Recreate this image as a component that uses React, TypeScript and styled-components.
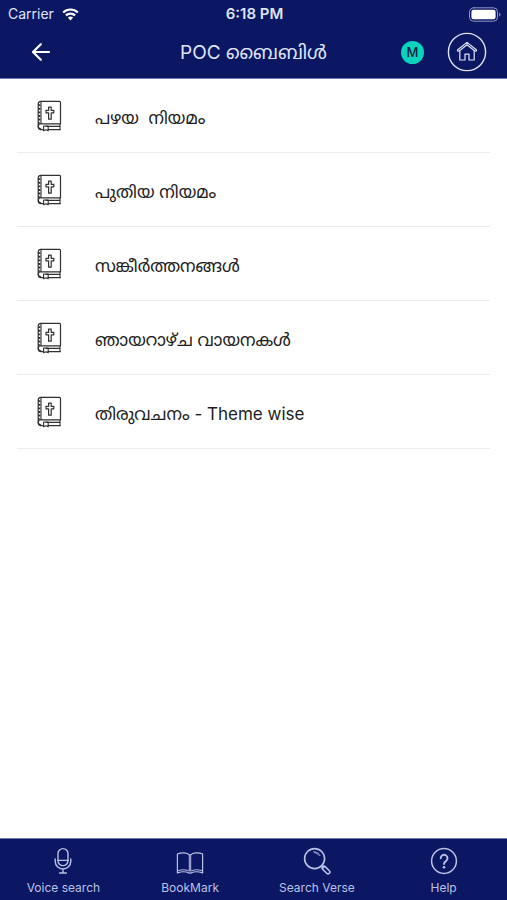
import React from "react";
import styled, { createGlobalStyle } from "styled-components";

const NAVY = "#0c1763";
const PALE = "#dfe4fa";

const GlobalStyle = createGlobalStyle`
  *, *::before, *::after { box-sizing: border-box; }
  body {
    margin: 0;
    background: #fff;
    font-family: Inter, "Noto Sans", "Noto Sans Malayalam", sans-serif;
  }
`;

const Screen = styled.div`
  display: flex;
  flex-direction: column;
  min-height: 100vh;
`;

const Header = styled.header`
  background: ${NAVY};
  color: #fff;
  border-bottom: 1px solid #6f78b4;
`;

const StatusBar = styled.div`
  display: grid;
  grid-template-columns: 1fr auto 1fr;
  align-items: center;
  height: 26px;
  padding: 2px 6px 0 8px;
  font-size: 14px;
  line-height: 20px;
  color: ${PALE};
`;

const Carrier = styled.span`
  display: flex;
  align-items: center;
  gap: 8px;
`;

const Clock = styled.time`
  font-size: 15px;
  font-weight: 600;
`;

const BatterySlot = styled.span`
  display: flex;
  justify-content: flex-end;
`;

const NavBar = styled.div`
  display: grid;
  grid-template-columns: 1fr auto 1fr;
  align-items: center;
  height: 52px;
  padding: 0 20px;
`;

const Title = styled.h1`
  margin: 0;
  padding-top: 2px;
  font-size: 19px;
  line-height: 28px;
  font-weight: 400;
  color: ${PALE};
  white-space: nowrap;
`;

const Actions = styled.div`
  display: flex;
  align-items: center;
  justify-content: flex-end;
  gap: 23px;
`;

const PlainButton = styled.button`
  display: flex;
  align-items: center;
  justify-content: center;
  padding: 0;
  border: 0;
  background: none;
  color: inherit;
  font: inherit;
  cursor: pointer;
`;

const BackButton = styled(PlainButton)`
  width: 42px;
  height: 40px;
`;

const LanguageButton = styled(PlainButton)`
  width: 23px;
  height: 23px;
  border-radius: 50%;
  background: #08d3bd;
  color: #06213a;
  font-size: 13px;
  line-height: 16px;
  font-weight: 500;
`;

const HomeButton = styled(PlainButton)`
  width: 40px;
  height: 40px;
`;

const Main = styled.main`
  flex: 1;
`;

const BookList = styled.ul`
  margin: 0;
  padding: 0 17px;
  list-style: none;
`;

const BookItem = styled.li`
  border-bottom: 1px solid #ececec;
`;

const BookLink = styled.a`
  display: flex;
  align-items: center;
  gap: 33px;
  height: 73px;
  padding: 0 19px;
  color: #1d1d1d;
  text-decoration: none;
`;

const BookLabel = styled.span`
  padding-top: 4px;
  font-size: 17px;
  line-height: 28px;
  white-space: pre;
`;

const TabBar = styled.nav`
  display: grid;
  grid-template-columns: repeat(4, 1fr);
  height: 62px;
  border-top: 1px solid #6f78b4;
  background: ${NAVY};
`;

const Tab = styled.button`
  display: flex;
  flex-direction: column;
  align-items: center;
  gap: 5px;
  padding: 8px 0 0;
  border: 0;
  background: none;
  color: #b9c1e4;
  font-family: inherit;
  font-size: 12px;
  line-height: 16px;
  cursor: pointer;
`;

const Glyph = styled.svg`
  display: block;
  flex: none;
  fill: none;
  stroke: currentColor;
  stroke-linecap: round;
  stroke-linejoin: round;
`;

const WifiIcon = () => (
  <Glyph width="17" height="13" viewBox="0 0 17 13" strokeWidth="2.2" color="#fff">
    <path d="M1.2 4.5a10.4 10.4 0 0 1 14.6 0M3.9 7.4a6.6 6.6 0 0 1 9.2 0" strokeLinecap="butt" />
    <path d="M8.5 12.4 5.9 9.6a3.8 3.8 0 0 1 5.2 0Z" fill="currentColor" stroke="none" />
  </Glyph>
);

const BatteryIcon = () => (
  <Glyph width="32" height="15" viewBox="0 0 32 15" color="#fff">
    <rect x="0.5" y="0.8" width="28" height="13.4" rx="4" stroke="#8f97c6" />
    <rect x="2.4" y="2.7" width="24.2" height="9.6" rx="2.2" fill="currentColor" stroke="none" />
    <path d="M30.2 5.4c1.8.8 1.8 3.4 0 4.2Z" fill="#8f97c6" stroke="none" />
  </Glyph>
);

const BackIcon = () => (
  <Glyph width="20" height="20" viewBox="0 0 20 20" strokeWidth="2.2">
    <path d="M18 10H2.2M9.8 2.2 2 10l7.8 7.8" />
  </Glyph>
);

const HomeIcon = () => (
  <Glyph width="40" height="40" viewBox="0 0 40 40" strokeWidth="1.2" color={PALE}>
    <circle cx="20" cy="20" r="18.6" strokeWidth="1.4" />
    <path d="M11 19.2a.9.9 0 0 1-.3-1.4L20 10.4l9.3 7.4a.9.9 0 0 1-.3 1.4l-1.2-.2L20 12.8 12.2 19Z" />
    <path d="M12.8 19v9h5.2v-5.8h4V28h5.2v-9" />
  </Glyph>
);

const BibleIcon = () => (
  <Glyph width="26" height="32" viewBox="0 0 26 32" strokeWidth="1.2" color="#303030">
    <path d="M5 1.4h18.5a1 1 0 0 1 1 1v21.4H5.2M5 1.4A2.8 2.8 0 0 0 2.2 4v23.2A2.8 2.8 0 0 0 5 29.6h2.6" />
    <path d="M5 1.4v22.4c-3.6.2-3.6 4.6-.2 4.9M12 29.6h12.5M24 24v5.4M10 26.4h14" strokeWidth="1.1" />
    <path d="M3.3 4.2v19.6" strokeWidth="2.2" strokeDasharray="1.9 1.7" strokeLinecap="butt" />
    <path d="M7.6 26h4.6v4.8l-2.3-1.1-2.3 1.1Z" strokeWidth="1.1" />
    <path d="M12.6 7.2h2.6v3.2h2.6v2.4h-2.6v6.4h-2.6v-6.4H10v-2.4h2.6Z" strokeWidth="1.2" />
  </Glyph>
);

const MicIcon = () => (
  <Glyph width="28" height="28" viewBox="0 0 28 28" strokeWidth="1.4">
    <rect x="9" y="1.6" width="10" height="17" rx="5" />
    <path d="M9 13.4h10M6.2 12v2.2a7.8 7.8 0 0 0 15.6 0V12M14 22v4M10.6 26h6.8" />
  </Glyph>
);

const OpenBookIcon = () => (
  <Glyph width="28" height="28" viewBox="0 0 28 28" strokeWidth="1.2">
    <path d="M13.3 7.8C11.4 5.6 5.6 5 1.4 7v18.9c4-1.4 8.6-1.4 11.6.1M14.7 7.8c1.9-2.2 7.7-2.8 11.9-.8v18.9c-4-1.4-8.6-1.4-11.6.1" />
    <path d="M13.3 7.8v16.4c-2.4-1.6-7.4-2-11.9-.5M14.7 7.8v16.4c2.4-1.6 7.4-2 11.9-.5M13 26h2" strokeWidth="1" />
  </Glyph>
);

const MagnifierIcon = () => (
  <Glyph width="28" height="28" viewBox="0 0 28 28" strokeWidth="1.6">
    <circle cx="11.6" cy="11.6" r="10" />
    <path d="m18.8 18.8 1.8 1.8M22.2 19.6l4.1 4.1a1.8 1.8 0 0 1-2.6 2.6l-4.1-4.1a1.8 1.8 0 0 1 2.6-2.6Z" />
    <path d="M10.8 4.6c3 .1 5.2 1.7 6.2 4M11.2 5.6c2 .3 3.8 1.3 4.8 2.7" strokeWidth="0.8" />
  </Glyph>
);

const HelpIcon = () => (
  <Glyph width="28" height="28" viewBox="0 0 28 28" strokeWidth="1.5">
    <circle cx="14" cy="14" r="12.4" />
    <path d="M10.7 11.2a3.4 3.4 0 1 1 5.2 2.9c-1.2.8-1.9 1.4-1.9 3" strokeWidth="1.9" />
    <circle cx="14" cy="20.2" r="1.3" fill="currentColor" stroke="none" />
  </Glyph>
);

const books = [
  "പഴയ  നിയമം",
  "പുതിയ നിയമം",
  "സങ്കീർത്തനങ്ങൾ",
  "ഞായറാഴ്ച വായനകൾ",
  "തിരുവചനം - Theme wise",
];

const tabs = [
  { label: "Voice search", Icon: MicIcon },
  { label: "BookMark", Icon: OpenBookIcon },
  { label: "Search Verse", Icon: MagnifierIcon },
  { label: "Help", Icon: HelpIcon },
];

export default function App() {
  return (
    <Screen>
      <GlobalStyle />
      <Header>
        <StatusBar>
          <Carrier>
            Carrier
            <WifiIcon />
          </Carrier>
          <Clock>6:18 PM</Clock>
          <BatterySlot>
            <BatteryIcon />
          </BatterySlot>
        </StatusBar>
        <NavBar>
          <BackButton type="button" aria-label="Back">
            <BackIcon />
          </BackButton>
          <Title>POC ബൈബിൾ</Title>
          <Actions>
            <LanguageButton type="button">M</LanguageButton>
            <HomeButton type="button" aria-label="Home">
              <HomeIcon />
            </HomeButton>
          </Actions>
        </NavBar>
      </Header>
      <Main>
        <BookList>
          {books.map((name) => (
            <BookItem key={name}>
              <BookLink href="#">
                <BibleIcon />
                <BookLabel>{name}</BookLabel>
              </BookLink>
            </BookItem>
          ))}
        </BookList>
      </Main>
      <TabBar>
        {tabs.map(({ label, Icon }) => (
          <Tab key={label} type="button">
            <Icon />
            {label}
          </Tab>
        ))}
      </TabBar>
    </Screen>
  );
}
